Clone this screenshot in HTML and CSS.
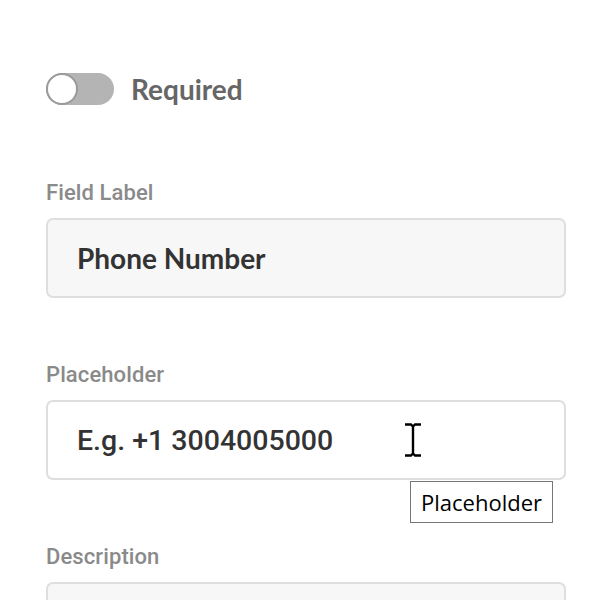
FILE: index.html
```html
<!DOCTYPE html>
<html>
<head>
<meta charset="utf-8">
<link rel="stylesheet" href="styles.css">
</head>
<body>
<div class="panel">
  <div class="toggle-row">
    <span class="toggle"><span class="knob"></span></span>
    <span class="toggle-label">Required</span>
  </div>

  <div class="field">
    <div class="label">Field Label</div>
    <div class="input filled"><span class="value lato">Phone Number</span></div>
  </div>

  <div class="field">
    <div class="label">Placeholder</div>
    <div class="input">
      <span class="value">E.g. +1 3004005000</span>
      <svg class="ibeam" width="18" height="34" viewBox="0 0 18 34">
        <path d="M1 1.5h6l2 2 2-2h6M9 3.5v27M1 32.5h6l2-2 2 2h6" fill="none" stroke="#000" stroke-width="2.4"/>
      </svg>
      <span class="tooltip">Placeholder</span>
    </div>
  </div>

  <div class="field">
    <div class="label">Description</div>
    <div class="input filled"></div>
  </div>
</div>
</body>
</html>
```

FILE: styles.css
```css
html, body {
  margin: 0;
  padding: 0;
  background: #fff;
}
body {
  font-family: Roboto, "Liberation Sans", sans-serif;
  overflow: hidden;
  height: 600px;
}
.panel {
  padding: 73px 0 0 46px;
  width: 520px;
  display: flex;
  flex-direction: column;
}
.toggle-row {
  display: flex;
  align-items: center;
  gap: 17px;
  height: 32px;
  margin-bottom: 75px;
}
.toggle {
  position: relative;
  width: 68px;
  height: 32px;
  border-radius: 16px;
  background: #b4b4b4;
  display: block;
}
.knob {
  position: absolute;
  left: 0;
  top: 0;
  width: 28px;
  height: 28px;
  border-radius: 50%;
  background: #fff;
  border: 2px solid #9a9a9a;
}
.toggle-label {
  font-family: Lato, sans-serif;
  font-weight: 700;
  font-size: 28px;
  color: #666;
  line-height: 32px;
}
.field {
  display: flex;
  flex-direction: column;
  margin-bottom: 64px;
}
.label {
  font-size: 22px;
  line-height: 26px;
  font-weight: 500;
  color: #8a8a8a;
  margin-bottom: 12px;
  letter-spacing: 0.1px;
}
.input {
  position: relative;
  height: 80px;
  box-sizing: border-box;
  border: 2px solid #dedede;
  border-radius: 7px;
  background: #fff;
  display: flex;
  align-items: center;
  padding-left: 29px;
}
.input.filled {
  background: #f7f7f7;
}
.value {
  font-size: 28.5px;
  color: #333;
  font-weight: 500;
}
.value.lato {
  font-family: Lato, sans-serif;
  font-size: 28px;
  font-weight: 700;
  color: #333;
}
.ibeam {
  position: absolute;
  left: 356px;
  top: 21px;
}
.tooltip {
  position: absolute;
  left: 362px;
  top: 79px;
  padding: 0 10px;
  height: 40px;
  line-height: 40px;
  border: 1px solid #767676;
  background: #fff;
  font-family: "Open Sans", "Noto Sans", sans-serif;
  font-size: 22px;
  color: #000;
  white-space: nowrap;
  z-index: 2;
}
```
